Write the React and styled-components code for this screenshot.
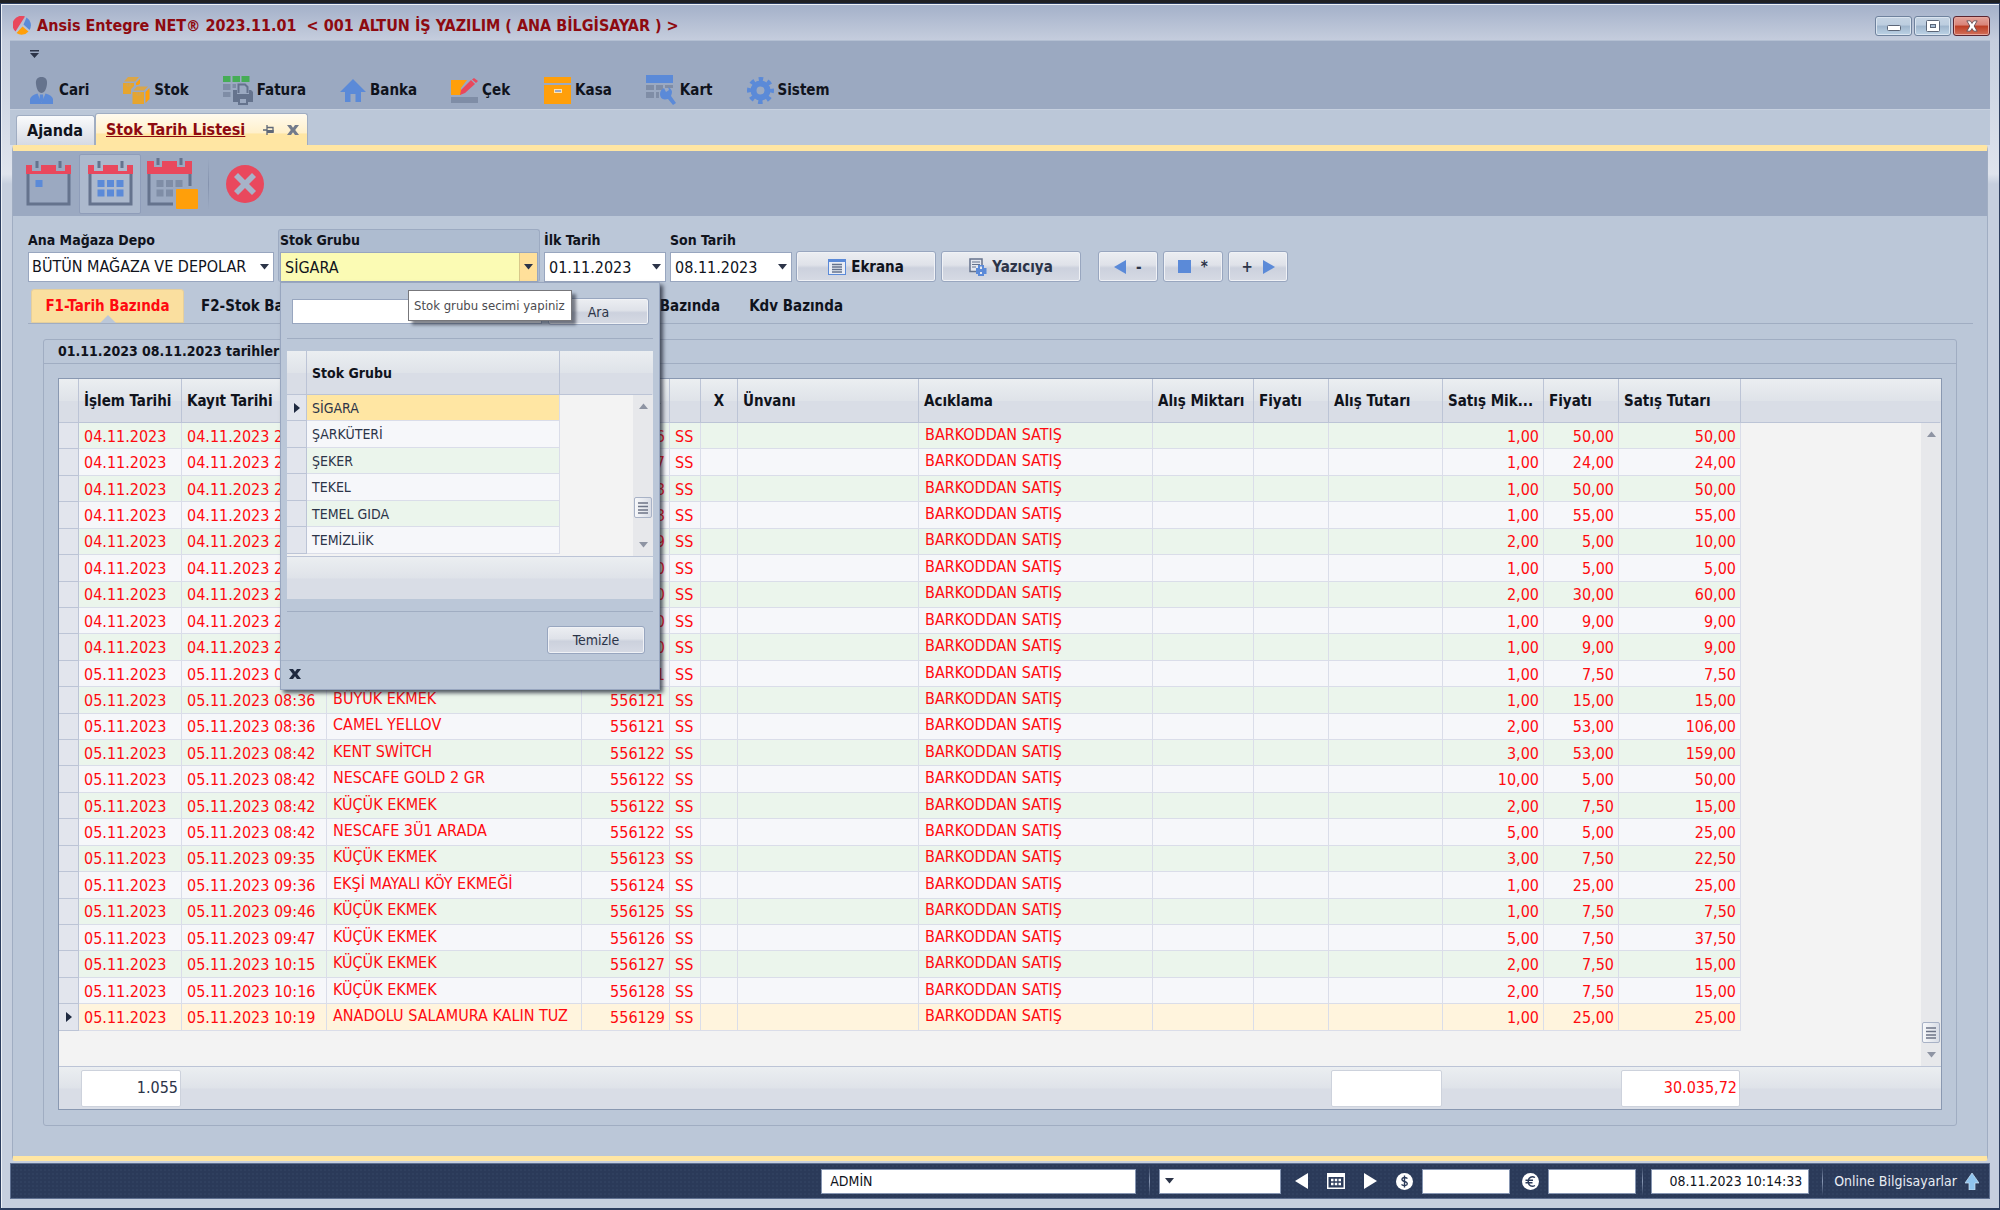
import React, { useState } from "react";
import styled, { createGlobalStyle } from "styled-components";

const GlobalStyle = createGlobalStyle`
  * {
    box-sizing: border-box;
  }
  body {
    margin: 0;
    background-color: #1f2023;
    font-family: "DejaVu Sans Condensed", "Noto Sans", sans-serif;
    font-size: 15px;
    line-height: 20px;
    color: #10131c;
  }
  button, input, select {
    font: inherit;
    color: inherit;
    margin: 0;
    padding: 0;
    border: none;
    background: none;
    border-radius: 0;
    outline: none;
    min-width: 0;
  }
  svg {
    display: block;
    flex: none;
  }
`;

const Screen = styled.div`
  min-height: 100vh;
  padding-top: 3px;
  display: flex;
`;
const Window = styled.main`
  flex: 1;
  min-width: 0;
  border: 1px solid #2c3d5e;
  border-bottom-width: 2px;
  box-shadow: inset 1px 1px 0 #eef1f6;
  background: linear-gradient(#a3b0c9, #c5cddd 36px, #cad2e1 60px, #dfe4ed 170px, #c6cfde 180px);
  padding: 0 9px 9px;
  display: flex;
  flex-direction: column;
`;
const TitleBar = styled.header`
  height: 36px;
  display: flex;
  align-items: center;
  padding: 7px 0 0 3px;
`;
const Title = styled.h1`
  flex: 1;
  margin: 0 0 0 6px;
  font-size: 16px;
  font-weight: bold;
  color: #8e0a10;
  white-space: pre;
`;
const Caption = styled.div`
  display: flex;
  gap: 2px;
`;
const CaptionButton = styled.button`
  width: 37px;
  height: 20px;
  border: 1px solid ${(p) => (p.$close ? "#5b2530" : "#6f829d")};
  border-radius: 3px;
  box-shadow: inset 0 0 0 1px ${(p) => (p.$close ? "#e7a79d" : "#dbe5f0")};
  background: ${(p) =>
    p.$close
      ? "linear-gradient(#e3a39b, #d98378 45%, #bc3d24 50%, #d3705a)"
      : "linear-gradient(#c6d4e3, #bccddf 45%, #9fb5cc 50%, #bdd3e6)"};
  display: flex;
  align-items: center;
  justify-content: center;
`;

const Ribbon = styled.nav`
  height: 70px;
  background-color: #9ba9c1;
  border-top: 1px solid #b3bfd2;
  border-bottom: 1px solid #c6d0df;
  padding: 9px 0 0 20px;
`;
const MenuRow = styled.div`
  display: flex;
  align-items: center;
  gap: 34px;
  height: 32px;
  margin-top: 16px;
`;
const MenuItem = styled.button`
  display: flex;
  align-items: center;
  gap: 4px;
  font-weight: bold;
  font-size: 15px;
`;

const TabStrip = styled.div`
  height: 35px;
  background-color: #bbc7d8;
  display: flex;
  align-items: flex-end;
  padding-left: 6px;
`;
const DocTab = styled.div`
  display: flex;
  align-items: center;
  height: ${(p) => (p.$active ? "32px" : "30px")};
  width: ${(p) => (p.$active ? "213px" : "79px")};
  padding: 0 8px 0 10px;
  border: 1px solid #a0adc2;
  border-bottom: none;
  border-radius: 3px 3px 0 0;
  background: ${(p) =>
    p.$active
      ? "linear-gradient(#fffaee, #fff0cb 60%, #ffe6a3 65%)"
      : "linear-gradient(#fafbfc, #e6e9ef 55%, #d5dae4)"};
`;
const TabLabel = styled.button`
  flex: 1;
  text-align: left;
  font-weight: bold;
  white-space: nowrap;
  font-size: 16px;
  color: ${(p) => (p.$active ? "#8e0a10" : "#10131c")};
  text-decoration: ${(p) => (p.$active ? "underline" : "none")};
`;
const TabTools = styled.div`
  display: flex;
  align-items: center;
  gap: 13px;
`;
const IconButton = styled.button`
  display: flex;
`;

const Document = styled.section`
  flex: 1;
  margin: 0 2px 2px;
  border: 1px solid #a0adc2;
  border-radius: 3px;
  border-top: 6px solid #ffe6a3;
  border-bottom: 5px solid #ffe6a3;
  background-color: #bbc7d8;
`;
const ToolBar = styled.div`
  height: 65px;
  background-color: #9ba9c1;
  display: flex;
  align-items: center;
  padding-left: 4px;
`;
const ToolButton = styled.button`
  width: 62px;
  height: 60px;
  display: flex;
  align-items: center;
  justify-content: center;
  border: 1px solid ${(p) => (p.$active ? "#8f9db9" : "transparent")};
  border-radius: 2px;
  background-color: ${(p) => (p.$active ? "#acb9cd" : "transparent")};
`;
const ToolDivider = styled.span`
  width: 1px;
  height: 52px;
  margin: 0 5px;
  background: linear-gradient(transparent, #8492ad, transparent);
`;

const Filters = styled.div`
  display: flex;
  align-items: flex-end;
  gap: 4px;
  padding: 13px 0 0 15px;
`;
const Field = styled.div`
  position: relative;
  flex: none;
  width: ${(p) => p.$width};
  height: 53px;
  padding: ${(p) => (p.$active ? "0 1px" : "1px 0 0 0")};
  border: ${(p) => (p.$active ? "1px solid #9caac1" : "none")};
  border-bottom: none;
  border-radius: 3px;
  background-color: ${(p) => (p.$active ? "#aebcd0" : "transparent")};
`;
const FieldLabel = styled.label`
  display: block;
  height: 22px;
  line-height: 21px;
  font-size: 14px;
  font-weight: bold;
  white-space: nowrap;
`;
const Control = styled.div`
  display: flex;
  align-items: center;
  height: 30px;
  font-size: 16px;
  border: 1px solid #98a6bf;
  background-color: ${(p) => (p.$active ? "#fbfbb4" : "#ffffff")};
`;
const Input = styled.input`
  flex: 1;
  height: 100%;
  padding-left: 4px;
`;
const Select = styled.select`
  flex: 1;
  height: 100%;
  padding-left: 3px;
  appearance: none;
`;
const DropButton = styled.button`
  width: 18px;
  height: 100%;
  display: flex;
  align-items: center;
  justify-content: center;
  background-color: ${(p) => (p.$active ? "#ffe09a" : "transparent")};
  border-left: ${(p) => (p.$active ? "1px solid #d8c88a" : "none")};
`;
const Button = styled.button`
  display: flex;
  align-items: center;
  justify-content: center;
  gap: 5px;
  flex: none;
  width: ${(p) => p.$width};
  height: ${(p) => p.$height || "31px"};
  border: 1px solid #98a6bf;
  border-radius: 3px;
  box-shadow: inset 0 0 0 1px #f0f2f6;
  background: linear-gradient(#eceef2, #dfe2e9 45%, #ccd1dd 55%, #d6dae4);
  color: ${(p) => (p.$dark ? "#10131c" : "#2c3448")};
  font-weight: ${(p) => (p.$bold ? "bold" : "normal")};
  font-size: ${(p) => (p.$bold ? "15px" : "14px")};
`;
const ButtonGroup = styled.div`
  display: flex;
  gap: 5px;
  margin-left: ${(p) => p.$space || "0"};
`;

const ReportTabs = styled.div`
  display: flex;
  height: 35px;
  margin: 7px 14px 0 15px;
  padding-left: 3px;
  border-bottom: 1px solid #a0adc2;
`;
const ReportTab = styled.button`
  position: relative;
  width: ${(p) => p.$width || "auto"};
  padding: 0 0 0 17px;
  font-weight: bold;
  white-space: nowrap;
  font-size: 15px;
  text-align: ${(p) => p.$align || "left"};
  ${(p) =>
    p.$active &&
    `
    color: #ff0a10;
    padding: 0;
    text-align: center;
    border-radius: 3px 3px 0 0;
    border: 1px solid #e5cf9c;
    background-color: #fadf9f;
  `}
`;
const Notch = styled.svg`
  position: absolute;
  left: 50%;
  bottom: -1px;
  margin-left: -8px;
`;

const Group = styled.section`
  margin: 15px 30px 30px;
  padding-bottom: 15px;
  border: 1px solid #a0adc2;
  border-radius: 3px;
`;
const GroupTitle = styled.h2`
  margin: 0 0 14px;
  padding-left: 14px;
  height: 24px;
  line-height: 23px;
  font-size: 14px;
  font-weight: bold;
  border-bottom: 1px solid #a0adc2;
`;

const headerFill = "linear-gradient(#ebeef1, #dfe3e9 50%, #d9dde6 52%)";

const Frame = styled.div`
  margin: 0 14px;
  border: 1px solid #8998b1;
`;
const Table = styled.table`
  width: 100%;
  height: ${(p) => p.$height};
  table-layout: fixed;
  border-collapse: separate;
  border-spacing: 0;
  background-color: #f3f3f3;
`;
const Th = styled.th`
  height: 44px;
  padding: ${(p) => (p.$align ? "0" : "0 4px 0 5px")};
  text-align: ${(p) => p.$align || "left"};
  font-size: ${(p) => p.$size || "15px"};
  white-space: nowrap;
  overflow: hidden;
  text-overflow: ellipsis;
  background: ${headerFill};
  border-right: 1px solid ${(p) => (p.$last ? "transparent" : "#bcc4d6")};
  border-bottom: 1px solid #bcc4d6;
`;
const SortMark = styled.span`
  display: flex;
  justify-content: flex-end;
  padding-right: 4px;
`;
const Row = styled.tr`
  background-color: ${(p) => (p.$selected ? p.$selected : p.$even ? "#ebf5ec" : "#f6f7fa")};
`;
const Cell = styled.td`
  padding: 2px 4px 0 5px;
  line-height: 20px;
  font-size: ${(p) => p.$size || "16px"};
  color: ${(p) => p.$color || "#ff0a10"};
  text-align: ${(p) => p.$align || "left"};
  white-space: nowrap;
  overflow: hidden;
  border-right: 1px solid #dadde9;
  border-bottom: 1px solid #dadde9;
`;
// product and description columns sit a little higher than the numbers
const MemoCell = styled(Cell)`
  padding: 0 0 2px 6px;
`;
const GroupCell = styled(Cell)`
  padding: 0 0 0 5px;
`;
const Indicator = styled.td`
  padding: 0 0 0 7px;
  background-color: #e2e5ed;
  border-right: 1px solid #bcc4d6;
  border-bottom: 1px solid #bcc4d6;
`;
const Blank = styled.td`
  padding: 0;
  height: ${(p) => p.$height || "auto"};
  background-color: #f3f3f3;
`;
const ScrollCell = styled.td`
  padding: 0;
  background-color: #e7e8eb;
  height: 1px;
`;
const ScrollTrack = styled.div`
  height: 100%;
  min-height: ${(p) => p.$height};
  display: flex;
  flex-direction: column;
  align-items: center;
  justify-content: space-between;
  padding: 8px 0;
`;
const ScrollEnd = styled.div`
  display: flex;
  flex-direction: column;
  align-items: center;
  gap: ${(p) => p.$gap || "9px"};
`;
const ScrollThumb = styled.span`
  width: 18px;
  height: 21px;
  display: flex;
  align-items: center;
  justify-content: center;
  border: 1px solid #a8b2c6;
  border-radius: 2px;
  background: linear-gradient(90deg, #f7f8fa, #d9dde6);
`;
const FootCell = styled.td`
  height: 43px;
  padding: 0 1px 0 2px;
  background: ${headerFill};
  border-top: 1px solid #bcc4d6;
`;
const Total = styled.output`
  display: flex;
  align-items: center;
  justify-content: flex-end;
  height: 37px;
  padding-right: 2px;
  font-size: 16px;
  color: ${(p) => p.$color || "#2c3448"};
  background-color: #ffffff;
  border: 1px solid #cdd2dc;
  border-radius: 2px;
`;

const Popup = styled.div`
  position: absolute;
  z-index: 2;
  top: 52px;
  left: 1px;
  width: 380px;
  padding: 15px 6px 0;
  background-color: #bbc7d8;
  border: 1px solid #98a6bf;
  box-shadow: 3px 3px 4px rgba(30, 35, 50, 0.75);
`;
const PopupBar = styled.div`
  display: flex;
  justify-content: ${(p) => (p.$end ? "flex-end" : "space-between")};
  align-items: center;
  padding: ${(p) => (p.$end ? "14px 8px 6px 0" : "0 4px 13px 5px")};
`;
const SearchInput = styled.input`
  width: 250px;
  height: 25px;
  background-color: #ffffff;
  border: 1px solid #98a6bf;
`;
const PopupBody = styled.div`
  padding: 12px 0;
  border-top: 1px solid #a0adc2;
  border-bottom: 1px solid #a0adc2;
`;
const PopupFooter = styled.div`
  display: flex;
  align-items: center;
  height: 29px;
  margin: 0 -6px;
  padding: 0 0 3px 8px;
  border-top: 1px solid #a9b6ca;
`;
const Tooltip = styled.div`
  position: absolute;
  z-index: 3;
  top: 60px;
  left: 129px;
  width: 164px;
  height: 31px;
  padding: 0 5px;
  line-height: 29px;
  font-size: 13px;
  white-space: nowrap;
  color: #4b4b4f;
  background-color: #ffffff;
  border: 1px solid #77777b;
  box-shadow: 4px 4px 3px rgba(30, 35, 50, 0.55);
`;

const StatusBar = styled.footer`
  height: 36px;
  display: flex;
  align-items: center;
  justify-content: flex-end;
  padding-right: 10px;
  border: 1px solid #5f7090;
  background-color: #2b3a59;
  background-image: radial-gradient(#30405f 1px, transparent 1px);
  background-size: 4px 4px;
  color: #e8ecf3;
  font-size: 14px;
`;
const StatusInput = styled.input`
  width: ${(p) => p.$width};
  height: 25px;
  padding: ${(p) => (p.$align ? "0 6px 0 0" : "0 0 0 8px")};
  text-align: ${(p) => p.$align || "left"};
  color: #10131c;
  background-color: #ffffff;
  border: 1px solid #8796b2;
`;
const StatusDrop = styled.button`
  width: 122px;
  height: 25px;
  padding-left: 5px;
  background-color: #ffffff;
  border: 1px solid #8796b2;
`;
const StatusSplit = styled.span`
  width: 1px;
  height: 30px;
  margin: 0 ${(p) => p.$right || "9px"} 0 ${(p) => p.$left || "13px"};
  background: linear-gradient(transparent, #8796b2, transparent);
`;
const StatusTools = styled.div`
  display: flex;
  align-items: center;
  gap: 19px;
  padding: 0 9px 0 14px;
`;
const StatusIcon = styled.span`
  padding: 0 9px 0 12px;
`;
const Online = styled.button`
  display: flex;
  align-items: center;
  gap: 8px;
  white-space: nowrap;
`;

const BLUE = "#5b8ad8";
const RED = "#e9485d";
const SLATE = "#65738d";
const ORANGE = "#ff9f0a";

const DownArrow = ({ size = 9, color = "#2c3448" }) => (
  <svg width={size} height="6" viewBox="0 0 9 6">
    <path d="M0 0H9L4.500 5.500Z" fill={color} />
  </svg>
);
const UpArrow = () => (
  <svg width="9" height="6" viewBox="0 0 9 6">
    <path d="M0 6H9L4.500 .5Z" fill="#8e94a3" />
  </svg>
);
const RowArrow = () => (
  <svg width="6" height="10" viewBox="0 0 6 10">
    <path d="M0 0L6 5L0 10Z" fill="#1f2a40" />
  </svg>
);
const Grip = () => (
  <svg width="10" height="12" viewBox="0 0 10 12">
    <path d="M0 1H10M0 4.500H10M0 8H10M0 11H10" stroke="#6d7487" strokeWidth="1.500" />
  </svg>
);
const Cross = ({ size = 12, color = "#737b8b" }) => (
  <svg width={size} height={size} viewBox="0 0 12 12">
    <path d="M0 1H4L6 3.800L8 1H12L8.200 6L12 11H8L6 8.200L4 11H0L3.800 6Z" fill={color} />
  </svg>
);
const Pin = () => (
  <svg width="11" height="10" viewBox="0 0 11 10">
    <path d="M0 5H4M4 0V10M4 2.500H10V7.500" stroke="#5f6878" strokeWidth="1.300" fill="none" />
    <path d="M4 5H10.600V8H4Z" fill="#5f6878" />
  </svg>
);
const Logo = () => (
  <svg width="18" height="19" viewBox="0 0 18 19">
    <path d="M12 .5A9 9 0 0 0 2.500 15.500Z" fill={RED} />
    <path d="M13.500 1.500A9 9 0 0 1 16.500 14L10.500 8.500Z" fill={BLUE} />
    <path d="M9.500 10.500L15.500 15.500A9 9 0 0 1 3.500 17Z" fill={ORANGE} />
  </svg>
);

const PersonIcon = () => (
  <svg width="25" height="27" viewBox="0 0 25 27">
    <path d="M11.500 0C15.500 0 17.500 2.500 17 7C16.500 12 14.500 16 11.500 16C8.500 16 6.500 12 6 7C5.500 2.500 7.500 0 11.500 0Z" fill={SLATE} />
    <path d="M0 27V22Q1 18 7.500 16.500L11.500 26L15.500 16.500Q22 18 23 22V27Z" fill={BLUE} />
    <path d="M10 17.500H13L13.500 23L11.500 26L9.500 23Z" fill={BLUE} />
  </svg>
);
const BoxesIcon = () => (
  <svg width="27" height="27" viewBox="0 0 27 27">
    <path d="M0 6H11V9L8 12V17H0ZM9.500 15H21V27H9.500Z" fill="#e6a52f" />
    <path d="M1 4.500L5 0H16L12 4.500ZM10.500 13.500L14 9.500H25L21 13.500Z" fill="#dba648" />
    <path d="M13 6L17 2V6.500L15 8H13ZM22.500 15L26.500 11V22L22.500 26Z" fill={ORANGE} />
    <path d="M4 6V9H7V6M14 15V18H17V15" stroke="#d1a45a" fill="none" />
  </svg>
);
const InvoiceIcon = () => (
  <svg width="30" height="29" viewBox="0 0 30 29">
    <path d="M0 0H7.500V6H0ZM9.500 0H17V6H9.500ZM18.500 0H26.500V6H18.500Z" fill="#46ad56" />
    <path d="M0 8H7.500V14H0ZM9.500 8H13V12H9.500ZM0 16H7.500V21H0Z" fill="#7f8da6" />
    <path d="M15.500 17V8.500H22L24.500 11V17" stroke={SLATE} strokeWidth="2" fill="none" />
    <path d="M10 14H14V18H26V14H28L30 16V26H25V23H15V26H10Z" fill={SLATE} />
    <path d="M16 22H24V28H16Z" stroke={SLATE} strokeWidth="2" fill="#9ba9c1" />
  </svg>
);
const HomeIcon = () => (
  <svg width="26" height="23" viewBox="0 0 26 23">
    <path d="M13 0L26 13H21V23H15.500V15H10.500V23H5V13H0Z" fill={BLUE} />
  </svg>
);
const EditIcon = () => (
  <svg width="27" height="25" viewBox="0 0 27 25">
    <path d="M0 2H16L10 10V17H0Z" fill={ORANGE} />
    <path d="M0 19H27V25H0Z" fill="#7f8da6" />
    <path d="M10 12L20 2L24 6L14 15L9 17ZM21 1.500L23 0L27 3L25 5Z" fill={RED} />
  </svg>
);
const SafeIcon = () => (
  <svg width="27" height="27" viewBox="0 0 27 27">
    <path d="M0 0H27V6H0ZM0 8H27V27H0Z" fill={ORANGE} />
    <rect x="10" y="12" width="8" height="4" fill="#ffe3b0" />
    <rect x="11" y="13" width="6" height="2" fill="#9ba9c1" />
  </svg>
);
const CardIcon = () => (
  <svg width="30" height="30" viewBox="0 0 30 30">
    <path d="M0 0H27V8H0Z" fill={BLUE} />
    <path d="M0 10H8V15H0ZM10 10H17V15H10ZM19 10H27V13H19ZM0 17H8V23H0ZM10 17H13V23H10Z" fill="#7f8da6" />
    <path d="M18 13L20 17L23 15L22 12Q28 15 25 21L30 28L27 30L22 24Q14 26 14 19Q14 15 18 13Z" fill={BLUE} />
  </svg>
);
const GearIcon = () => (
  <svg width="27" height="27" viewBox="0 0 27 27">
    <circle cx="13.500" cy="13.500" r="7" fill="none" stroke={BLUE} strokeWidth="6" />
    <circle cx="13.500" cy="13.500" r="11.500" fill="none" stroke={BLUE} strokeWidth="4" strokeDasharray="4.500 4.532" strokeDashoffset="2.200" />
  </svg>
);

const CalendarBase = ({ children, cut }) => (
  <svg width={cut ? 51 : 45} height={cut ? 51 : 46} viewBox={cut ? "0 0 51 51" : "0 0 45 46"}>
    <path d={cut ? "M2 15V46H26M43 15V28" : "M2 12V43H43V12"} stroke={SLATE} strokeWidth="3" fill="none" />
    <path d={cut ? "M0 3H7V9H15V3H30V9H38V3H45V16H0Z" : "M0 4H6V10H15V4H30V10H39V4H45V13H0Z"} fill={RED} />
    <path d="M9.500 0H12.500V7H9.500ZM32.500 0H35.500V7H32.500Z" fill={SLATE} />
    {children}
  </svg>
);
const CalendarDots = ({ color, count = 6, top = 19 }) =>
  Array.from({ length: count }, (_, i) => (
    <rect key={i} x={9.5 + (i % 3) * 9.5} y={i < 3 ? top : top + 9.5} width="7" height="7" fill={color} />
  ));

const menu = [
  ["Cari", PersonIcon],
  ["Stok", BoxesIcon],
  ["Fatura", InvoiceIcon],
  ["Banka", HomeIcon],
  ["Çek", EditIcon],
  ["Kasa", SafeIcon],
  ["Kart", CardIcon],
  ["Sistem", GearIcon],
];

const columns = [
  { label: "", width: 20 },
  { label: "İşlem Tarihi", width: 103 },
  { label: "Kayıt Tarihi", width: 145 },
  { label: "", width: 255 },
  { label: "", width: 88, sorted: true },
  { label: "", width: 31 },
  { label: "X", width: 37, align: "center" },
  { label: "Ünvanı", width: 181 },
  { label: "Acıklama", width: 234 },
  { label: "Alış Miktarı", width: 101 },
  { label: "Fiyatı", width: 75 },
  { label: "Alış Tutarı", width: 114 },
  { label: "Satış Mik...", width: 101 },
  { label: "Fiyatı", width: 75 },
  { label: "Satış Tutarı", width: 122 },
];

const rows = [
  ["04.11.2023", "04.11.2023 20:12", "", "556116", "1,00", "50,00", "50,00"],
  ["04.11.2023", "04.11.2023 20:15", "", "556117", "1,00", "24,00", "24,00"],
  ["04.11.2023", "04.11.2023 20:21", "", "556118", "1,00", "50,00", "50,00"],
  ["04.11.2023", "04.11.2023 20:21", "", "556118", "1,00", "55,00", "55,00"],
  ["04.11.2023", "04.11.2023 20:34", "", "556119", "2,00", "5,00", "10,00"],
  ["04.11.2023", "04.11.2023 20:40", "", "556120", "1,00", "5,00", "5,00"],
  ["04.11.2023", "04.11.2023 20:40", "", "556120", "2,00", "30,00", "60,00"],
  ["04.11.2023", "04.11.2023 20:40", "", "556120", "1,00", "9,00", "9,00"],
  ["04.11.2023", "04.11.2023 20:40", "", "556120", "1,00", "9,00", "9,00"],
  ["05.11.2023", "05.11.2023 08:36", "", "556121", "1,00", "7,50", "7,50"],
  ["05.11.2023", "05.11.2023 08:36", "BÜYÜK EKMEK", "556121", "1,00", "15,00", "15,00"],
  ["05.11.2023", "05.11.2023 08:36", "CAMEL YELLOV", "556121", "2,00", "53,00", "106,00"],
  ["05.11.2023", "05.11.2023 08:42", "KENT SWİTCH", "556122", "3,00", "53,00", "159,00"],
  ["05.11.2023", "05.11.2023 08:42", "NESCAFE GOLD 2 GR", "556122", "10,00", "5,00", "50,00"],
  ["05.11.2023", "05.11.2023 08:42", "KÜÇÜK EKMEK", "556122", "2,00", "7,50", "15,00"],
  ["05.11.2023", "05.11.2023 08:42", "NESCAFE 3Ü1 ARADA", "556122", "5,00", "5,00", "25,00"],
  ["05.11.2023", "05.11.2023 09:35", "KÜÇÜK EKMEK", "556123", "3,00", "7,50", "22,50"],
  ["05.11.2023", "05.11.2023 09:36", "EKŞİ MAYALI KÖY EKMEĞİ", "556124", "1,00", "25,00", "25,00"],
  ["05.11.2023", "05.11.2023 09:46", "KÜÇÜK EKMEK", "556125", "1,00", "7,50", "7,50"],
  ["05.11.2023", "05.11.2023 09:47", "KÜÇÜK EKMEK", "556126", "5,00", "7,50", "37,50"],
  ["05.11.2023", "05.11.2023 10:15", "KÜÇÜK EKMEK", "556127", "2,00", "7,50", "15,00"],
  ["05.11.2023", "05.11.2023 10:16", "KÜÇÜK EKMEK", "556128", "2,00", "7,50", "15,00"],
  ["05.11.2023", "05.11.2023 10:19", "ANADOLU SALAMURA KALIN TUZ", "556129", "1,00", "25,00", "25,00"],
];

const stockGroups = ["SİGARA", "ŞARKÜTERİ", "ŞEKER", "TEKEL", "TEMEL GIDA", "TEMİZLİİK"];

const GroupPicker = ({ selected, onSelect }) => (
  <Popup>
    <PopupBar>
      <SearchInput aria-label="Stok Grubu Ara" />
      <Button $width="101px" $height="27px">
        Ara
      </Button>
    </PopupBar>
    <PopupBody>
      <Table $height="248px">
        <colgroup>
          <col width="20" />
          <col width="253" />
          <col />
          <col width="20" />
        </colgroup>
        <thead>
          <tr>
            <Th />
            <Th $size="14px">Stok Grubu</Th>
            <Th colSpan={2} $last />
          </tr>
        </thead>
        <tbody>
          {stockGroups.map((name, i) => (
            <Row
              key={name}
              $even={i % 2 === 0}
              $selected={name === selected && "#ffe6a3"}
              onClick={() => onSelect(name)}
            >
              <Indicator>{name === selected && <RowArrow />}</Indicator>
              <GroupCell $size="14px" $color="#2c3448">
                {name}
              </GroupCell>
              {i === 0 && (
                <>
                  <Blank rowSpan={7} />
                  <ScrollCell rowSpan={7}>
                    <ScrollTrack $height="156px">
                      <UpArrow />
                      <ScrollEnd $gap="24px">
                        <ScrollThumb>
                          <Grip />
                        </ScrollThumb>
                        <DownArrow color="#8e94a3" />
                      </ScrollEnd>
                    </ScrollTrack>
                  </ScrollCell>
                </>
              )}
            </Row>
          ))}
          <tr>
            <Blank colSpan={2} $height="2px" />
          </tr>
        </tbody>
        <tfoot>
          <tr>
            <FootCell colSpan={4} />
          </tr>
        </tfoot>
      </Table>
    </PopupBody>
    <PopupBar $end>
      <Button $width="98px" $height="28px" onClick={() => onSelect("")}>
        Temizle
      </Button>
    </PopupBar>
    <PopupFooter>
      <IconButton aria-label="Kapat">
        <Cross color="#1f2a40" />
      </IconButton>
    </PopupFooter>
  </Popup>
);

const StockTable = () => (
  <Frame>
    <Table $height="730px">
      <colgroup>
        {columns.map((c, i) => (
          <col key={i} width={c.width} />
        ))}
        <col />
        <col width="20" />
      </colgroup>
      <thead>
        <tr>
          {columns.map((c, i) => (
            <Th key={i} $align={c.align}>
              {c.sorted ? (
                <SortMark>
                  <UpArrow />
                </SortMark>
              ) : (
                c.label
              )}
            </Th>
          ))}
          <Th colSpan={2} $last />
        </tr>
      </thead>
      <tbody>
        {rows.map(([date, saved, product, no, qty, price, total], i) => {
          const current = i === rows.length - 1;
          return (
            <Row key={i} $even={i % 2 === 0} $selected={current && "#fff4dd"}>
              <Indicator>{current && <RowArrow />}</Indicator>
              <Cell>{date}</Cell>
              <Cell>{saved}</Cell>
              <MemoCell>{product}</MemoCell>
              <Cell $align="right">{no}</Cell>
              <Cell>SS</Cell>
              <Cell />
              <Cell />
              <MemoCell>BARKODDAN SATIŞ</MemoCell>
              <Cell />
              <Cell />
              <Cell />
              <Cell $align="right">{qty}</Cell>
              <Cell $align="right">{price}</Cell>
              <Cell $align="right">{total}</Cell>
              {i === 0 && (
                <>
                  <Blank rowSpan={rows.length + 1} />
                  <ScrollCell rowSpan={rows.length + 1}>
                    <ScrollTrack $height="640px">
                      <UpArrow />
                      <ScrollEnd>
                        <ScrollThumb>
                          <Grip />
                        </ScrollThumb>
                        <DownArrow color="#8e94a3" />
                      </ScrollEnd>
                    </ScrollTrack>
                  </ScrollCell>
                </>
              )}
            </Row>
          );
        })}
        <tr>
          <Blank colSpan={columns.length} $height="35px" />
        </tr>
      </tbody>
      <tfoot>
        <tr>
          <FootCell />
          <FootCell>
            <Total>1.055</Total>
          </FootCell>
          <FootCell colSpan={9} />
          <FootCell>
            <Total />
          </FootCell>
          <FootCell colSpan={2} />
          <FootCell>
            <Total $color="#ff0a10">30.035,72</Total>
          </FootCell>
          <FootCell colSpan={2} />
        </tr>
      </tfoot>
    </Table>
  </Frame>
);

const FilterBar = () => {
  const [group, setGroup] = useState("SİGARA");
  const [from, setFrom] = useState("01.11.2023");
  const [to, setTo] = useState("08.11.2023");

  return (
    <Filters>
      <Field $width="246px">
        <FieldLabel htmlFor="depo">Ana Mağaza Depo</FieldLabel>
        <Control>
          <Select id="depo">
            <option>BÜTÜN MAĞAZA VE DEPOLAR</option>
          </Select>
          <DropButton as="span">
            <DownArrow />
          </DropButton>
        </Control>
      </Field>
      <Field $width="262px" $active>
        <FieldLabel htmlFor="grup">Stok Grubu</FieldLabel>
        <Control $active>
          <Input id="grup" value={group} onChange={(e) => setGroup(e.target.value)} />
          <DropButton $active aria-label="Stok Grubu listesi">
            <DownArrow />
          </DropButton>
        </Control>
        <GroupPicker selected={group} onSelect={setGroup} />
        <Tooltip role="tooltip">Stok grubu secimi yapiniz</Tooltip>
      </Field>
      <Field $width="122px">
        <FieldLabel htmlFor="ilk">İlk Tarih</FieldLabel>
        <Control>
          <Input id="ilk" value={from} onChange={(e) => setFrom(e.target.value)} />
          <DropButton aria-label="İlk Tarih seç">
            <DownArrow />
          </DropButton>
        </Control>
      </Field>
      <Field $width="122px">
        <FieldLabel htmlFor="son">Son Tarih</FieldLabel>
        <Control>
          <Input id="son" value={to} onChange={(e) => setTo(e.target.value)} />
          <DropButton aria-label="Son Tarih seç">
            <DownArrow />
          </DropButton>
        </Control>
      </Field>
      <ButtonGroup>
        <Button $width="140px" $bold $dark>
          <svg width="18" height="16" viewBox="0 0 18 16">
            <rect x=".5" y=".5" width="17" height="15" fill="#e9edf5" stroke={BLUE} />
            <path d="M0 0H18V3H0Z" fill={BLUE} />
            <path d="M4 5.500H14M4 8H14M4 10.500H14M4 13H14" stroke={SLATE} strokeWidth="1.500" />
          </svg>
          Ekrana
        </Button>
        <Button $width="140px" $bold>
          <svg width="18" height="18" viewBox="0 0 18 18">
            <path d="M8 13.500H1V1H13V8" fill="#e4e7ee" stroke={SLATE} strokeWidth="1.500" />
            <path d="M3 4H11M3 6.500H11M3 9H7" stroke={SLATE} />
            <path d="M9 7H15V10H17.500V16H15V18H9V16H7V10H9Z" fill={BLUE} />
            <path d="M11 8.500H13V11H11ZM11 14H13V16H11Z" fill="#e4e7ee" />
          </svg>
          Yazıcıya
        </Button>
      </ButtonGroup>
      <ButtonGroup $space="13px">
        <Button $width="60px" $bold>
          <svg width="12" height="14" viewBox="0 0 12 14">
            <path d="M12 0V14L0 7Z" fill={BLUE} />
          </svg>
          <span>&nbsp;-</span>
        </Button>
        <Button $width="60px" $bold>
          <svg width="13" height="13" viewBox="0 0 13 13">
            <path d="M0 0H13V13H0Z" fill={BLUE} />
          </svg>
          <span>&nbsp;*</span>
        </Button>
        <Button $width="60px" $bold>
          <span>+&nbsp;</span>
          <svg width="12" height="14" viewBox="0 0 12 14">
            <path d="M0 0V14L12 7Z" fill={BLUE} />
          </svg>
        </Button>
      </ButtonGroup>
    </Filters>
  );
};

const Status = () => (
  <StatusBar>
    <StatusInput $width="315px" defaultValue="ADMİN" aria-label="Kullanıcı" />
    <StatusSplit />
    <StatusDrop aria-label="Döviz tarihi">
      <DownArrow />
    </StatusDrop>
    <StatusTools>
      <IconButton aria-label="Önceki">
        <svg width="13" height="16" viewBox="0 0 13 16">
          <path d="M13 0V16L0 8Z" fill="#fff" />
        </svg>
      </IconButton>
      <IconButton aria-label="Takvim">
        <svg width="18" height="16" viewBox="0 0 18 16">
          <rect x=".75" y=".75" width="16.500" height="14.500" fill="none" stroke="#fff" strokeWidth="1.500" />
          <path d="M0 0H18V4H0Z" fill="#fff" />
          <path d="M4 7H14M4 11H14" stroke="#fff" strokeWidth="2.500" strokeDasharray="2.500 1.250" />
        </svg>
      </IconButton>
      <IconButton aria-label="Sonraki">
        <svg width="13" height="16" viewBox="0 0 13 16">
          <path d="M0 0V16L13 8Z" fill="#fff" />
        </svg>
      </IconButton>
      <svg width="17" height="17" viewBox="0 0 17 17">
        <circle cx="8.500" cy="8.500" r="8.500" fill="#fff" />
        <path d="M11.500 5.500Q8.500 3.500 6.300 5.300Q5 7.500 8.500 8.500Q12.300 9.700 10.900 11.700Q8.500 13.500 5.500 11.500M8.500 2.500V14.500" stroke="#2b3a59" strokeWidth="1.400" fill="none" />
      </svg>
    </StatusTools>
    <StatusInput $width="88px" aria-label="Dolar" />
    <StatusIcon>
      <svg width="17" height="17" viewBox="0 0 17 17">
        <circle cx="8.500" cy="8.500" r="8.500" fill="#fff" />
        <path d="M13 4.500Q9.500 2.500 7 5.500Q5.300 8.500 7 11.500Q9.500 14.500 13 12.500M3.500 7.300H11M3.500 9.700H10.500" stroke="#2b3a59" strokeWidth="1.400" fill="none" />
      </svg>
    </StatusIcon>
    <StatusInput $width="88px" aria-label="Euro" />
    <StatusSplit $left="6px" $right="8px" />
    <StatusInput $width="158px" $align="right" defaultValue="08.11.2023 10:14:33" aria-label="Saat" />
    <StatusSplit $left="13px" $right="11px" />
    <Online>
      Online Bilgisayarlar
      <svg width="14" height="17" viewBox="0 0 14 17">
        <path d="M7 0L14 10H10V17H4V10H0Z" fill="#8fc4ee" stroke="#cfe6f8" strokeWidth=".7" />
      </svg>
    </Online>
  </StatusBar>
);

const App = () => {
  return (
    <Screen>
      <GlobalStyle />
      <Window>
        <TitleBar>
          <Logo />
          <Title>{"Ansis Entegre NET® 2023.11.01  < 001 ALTUN İŞ YAZILIM ( ANA BİLGİSAYAR ) >"}</Title>
          <Caption>
            <CaptionButton aria-label="Küçült">
              <svg width="14" height="12" viewBox="0 0 14 12">
                <rect x=".5" y="5.500" width="13" height="5" rx="1" fill="#fff" stroke="#5b6577" />
              </svg>
            </CaptionButton>
            <CaptionButton aria-label="Geri yükle">
              <svg width="14" height="12" viewBox="0 0 14 12">
                <rect x=".5" y=".5" width="13" height="11" rx="1" fill="#fff" stroke="#5b6577" />
                <rect x="4.500" y="4.500" width="5" height="3" fill="#a9bfd6" stroke="#5b6577" />
              </svg>
            </CaptionButton>
            <CaptionButton $close aria-label="Kapat">
              <svg width="14" height="12" viewBox="-1 -1 14 14">
                <path
                  d="M0 0H4L6 3L8 0H12L8.500 6L12 12H8L6 9L4 12H0L3.500 6Z"
                  fill="#fff"
                  stroke="#5b4a52"
                />
              </svg>
            </CaptionButton>
          </Caption>
        </TitleBar>

        <Ribbon>
          <svg width="9" height="8" viewBox="0 0 9 8">
            <path d="M0 0H9V1.500H0ZM0 3H9L4.500 8Z" fill="#2c3448" />
          </svg>
          <MenuRow>
            {menu.map(([label, Icon]) => (
              <MenuItem key={label}>
                <Icon />
                {label}
              </MenuItem>
            ))}
          </MenuRow>
        </Ribbon>

        <TabStrip>
          <DocTab>
            <TabLabel>Ajanda</TabLabel>
          </DocTab>
          <DocTab $active>
            <TabLabel $active>Stok Tarih Listesi</TabLabel>
            <TabTools>
              <IconButton aria-label="Sabitle">
                <Pin />
              </IconButton>
              <IconButton aria-label="Sekmeyi kapat">
                <Cross />
              </IconButton>
            </TabTools>
          </DocTab>
        </TabStrip>

        <Document>
          <ToolBar>
            <ToolButton aria-label="Gün">
              <CalendarBase>
                <CalendarDots color={BLUE} count={1} />
              </CalendarBase>
            </ToolButton>
            <ToolButton $active aria-label="Hafta">
              <CalendarBase>
                <CalendarDots color={BLUE} />
              </CalendarBase>
            </ToolButton>
            <ToolButton aria-label="Ay">
              <CalendarBase cut>
                <CalendarDots color="#7f8da6" count={5} top={22} />
                <rect x="29" y="31" width="22" height="20" rx="1" fill={ORANGE} />
              </CalendarBase>
            </ToolButton>
            <ToolDivider />
            <ToolButton aria-label="İptal">
              <svg width="38" height="38" viewBox="0 0 38 38">
                <circle cx="19" cy="19" r="19" fill={RED} />
                <path
                  d="M8 12L12 8L19 15L26 8L30 12L23 19L30 26L26 30L19 23L12 30L8 26L15 19Z"
                  fill="#a7b3c8"
                />
              </svg>
            </ToolButton>
          </ToolBar>

          <FilterBar />

          <ReportTabs role="tablist">
            <ReportTab role="tab" $active $width="153px">
              F1-Tarih Bazında
              <Notch width="16" height="8" viewBox="0 0 16 8">
                <path d="M0 8L8 0L16 8Z" fill="#bbc7d8" />
              </Notch>
            </ReportTab>
            <ReportTab role="tab" $width="154px">
              F2-Stok Bazında
            </ReportTab>
            <ReportTab role="tab" $width="382px" $align="right">
              Bazında
            </ReportTab>
            <ReportTab role="tab" $width="123px" $align="right">
              Kdv Bazında
            </ReportTab>
          </ReportTabs>

          <Group>
            <GroupTitle>01.11.2023 08.11.2023 tarihleri</GroupTitle>
            <StockTable />
          </Group>
        </Document>

        <Status />
      </Window>
    </Screen>
  );
};

export default App;
